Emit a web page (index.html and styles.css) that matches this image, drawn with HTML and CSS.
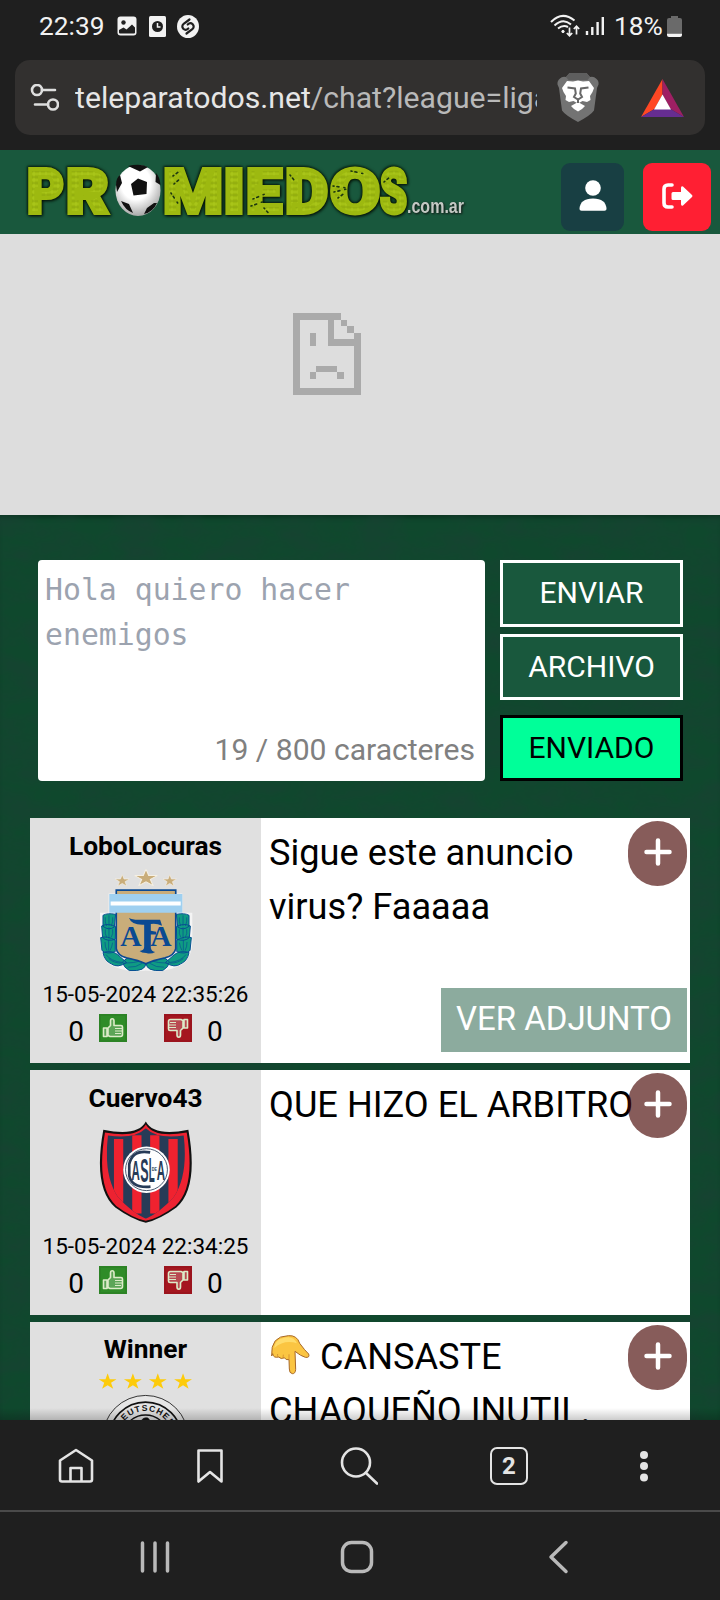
FILE: index.html
```
<!DOCTYPE html>
<html lang="es">
<head>
<meta charset="utf-8">
<title>Promiedos chat</title>
<link rel="stylesheet" href="styles.css">
</head>
<body>
<svg class="defs" width="0" height="0">
  <defs>
    <symbol id="thumb" viewBox="0 0 28 28">
      <rect x="1" y="1" width="26" height="26" fill="none" stroke="#000" stroke-opacity=".06" stroke-width="2"/>
      <path d="M4.500 14h3.500v8.500h-3.500zM9 14l2.500-2.500V7q0-2.200 1.700-2.200Q15 4.800 15 7v4.500h7q1.500 0 1.500 1.500v7.500q0 2-2 2H11L9 21.500z" fill="#fff" fill-opacity=".22" stroke="#dcebc8" stroke-width="1.600" stroke-linejoin="round"/>
      <path d="M16 14.500h7M16 17h7M16 19.500h6" stroke="#dcebc8" stroke-width="1"/>
    </symbol>
    <symbol id="star" viewBox="0 0 20 20" preserveAspectRatio="none">
      <path d="M10 0l2.400 7.500H20l-6.200 4.600 2.400 7.400L10 15l-6.200 4.500 2.400-7.400L0 7.500h7.600z"/>
    </symbol>
    <g id="laurel" fill="#0f9b83" stroke="#084f92" stroke-width="3">
      <path d="M247 318q14-8 38-3l-4 38q-16 12-34-2zM243 350q20-10 42 2l-1 38q-24 8-38-5zM240 385q20-6 44 8v34q-24 10-40-3zM247 430q26-8 44 6l27 24q-28 18-46 4-20-8-25-34zM306 458q20-26 70 2 2 28-50 24-18-10-20-26z"/>
      <path d="M265 318v32M254 324q-2 14 4 26M276 324q2 14-4 26M265 354v34M254 360q-2 14 4 24M276 360q2 14-4 24M264 392v32M253 398q0 16 6 26M276 400q-2 14-8 24M256 436q14 20 50 24M264 448q16 14 40 14M310 462q30 0 56-8M322 474q24 2 44-12" fill="none" stroke-width="2"/>
    </g>
  </defs>
</svg>

<div class="phone">
  <header class="status">
    <div class="status-left">
      <span class="clock">22:39</span>
      <svg class="s-img" width="20" height="20" viewBox="0 0 20 20"><rect x=".5" y=".5" width="19" height="19" rx="3" fill="#f2f2f2"/><circle cx="6.500" cy="6.500" r="2.200" fill="#1f1f1f"/><path d="M2 16.500v-2.500l4.500-2.500 3 2L15 8.500l3 3v5q0 1-1 1H3q-1 0-1-1z" fill="#1f1f1f"/></svg>
      <svg class="s-clock" width="17" height="21" viewBox="0 0 17 21"><rect width="17" height="21" rx="1.500" fill="#f2f2f2"/><circle cx="8.500" cy="10.500" r="5.500" fill="#1f1f1f"/><path d="M8.500 7v4h3" fill="none" stroke="#f2f2f2" stroke-width="1.500"/></svg>
      <svg class="s-shazam" width="22" height="23" viewBox="0 0 22 23"><ellipse cx="11" cy="11.500" rx="11" ry="11.500" fill="#f2f2f2"/><path d="M12.500 4.500L7 8.500q-3 2.500-.7 5.200 2.400 2.300 5-.2M9.500 18.500l5.500-4q3-2.500.7-5.200-2.400-2.300-5 .2" fill="none" stroke="#1f1f1f" stroke-width="2.200" stroke-linecap="round"/></svg>
    </div>
    <div class="status-right">
      <svg width="31" height="24" viewBox="0 0 31 24" fill="none" stroke="#f2f2f2" stroke-width="2"><path d="M1 8Q12-3.500 24.500 6.500M4.500 11.500Q13 3.500 21 10.500M8 14.500Q13 10.500 18 13"/><circle cx="13" cy="17.500" r="1.200" fill="#f2f2f2" stroke-width="1"/><path d="M19.500 13.500v8M16.800 19l2.700 2.700 2.700-2.700M26.500 20.500v-8M23.800 15l2.700-2.700 2.700 2.700" stroke-width="1.700"/></svg>
      <svg class="signal" width="20" height="20" viewBox="0 0 20 20" stroke="#f2f2f2" stroke-width="2.400"><path d="M2 15v4M7.300 11v8M12.600 6v13M17.800 1v18"/></svg>
      <span class="pct">18%</span>
      <svg class="battery" width="15" height="21" viewBox="0 0 15 21"><path d="M4 0h7v2h2q2 0 2 2v13H0V4q0-2 2-2h2z" fill="#6a6a6a"/><path d="M0 17.500h15V19q0 2-2 2H2q-2 0-2-2z" fill="#f4f4f4"/></svg>
    </div>
  </header>

  <div class="address">
    <svg class="tune" width="30" height="28" viewBox="0 0 30 28" fill="none" stroke="#dedede" stroke-width="2.600" stroke-linecap="round"><circle cx="8" cy="6" r="5"/><path d="M13 6h13M6 20.500h13"/><circle cx="24" cy="20.500" r="5"/></svg>
    <div class="url"><span class="host">teleparatodos.net</span>/chat?league=liga</div>
    <svg class="brave" width="42" height="49" viewBox="0 0 42 49"><path d="M12.500 0h17l3.500 4q4-.8 6 1.500 3 2 2.500 6l-1.500 3.500-3 22.500Q34 42 21 49 8 42 5 37.500L2 15 .5 11.500Q0 8 3 5.500 5 3.200 9 4z" fill="#737373"/><path d="M12.500 0h17l3.500 4-2.500 3H11.500L9 4z" fill="#5e5e5e"/><path d="M10 8l6 .5 5-1 5 1L32 8l5 7-1.500 4-2.500 4 .5 4-3.500 2-4.500-1-4.500 2.500-4.500-2.500-4.500 1-3.500-2 .5-4-2.500-4L5 15zM14 33l7-4 7 4-3 3-4 2.500-4-2.500z" fill="#fff"/><path d="M10.500 14.500l7.500 1 .8 5-1.800 3.500 4 2.500 4-2.500-1.800-3.500.8-5 7.500-1M21 26.500V30" fill="none" stroke="#686868" stroke-width="2"/></svg>
    <svg class="bat" width="43" height="38" viewBox="0 0 43 38"><path d="M21.500 0L0 38l13.500-8 8-14.500z" fill="#ff4724"/><path d="M21.500 0L43 38l-13.500-8-8-14.500z" fill="#9e1f63"/><path d="M0 38l13.500-8h16L43 38z" fill="#662d91"/><path d="M21.500 15.500l8.500 15H13z" fill="#fff"/></svg>
  </div>

  <div class="site-head">
    <svg class="logo" width="450" height="60" viewBox="0 0 450 60">
      <defs>
        <radialGradient id="ball" cx=".45" cy=".35" r=".65"><stop offset=".5" stop-color="#fff"/><stop offset="1" stop-color="#a9a9a9"/></radialGradient>
        <pattern id="cloth" width="6" height="6" patternUnits="userSpaceOnUse"><path d="M0 0h6v6H0z" fill="#9db910"/><path d="M0 2h6M2 0v6" stroke="#aeca1c" stroke-width="1"/><path d="M0 5h6" stroke="#86a00c" stroke-width=".8"/></pattern>
      </defs>
      <g class="word" fill="url(#cloth)" stroke="#9db910" stroke-width="4">
        <text x="7" y="53" textLength="37" lengthAdjust="spacingAndGlyphs">P</text>
        <text x="46" y="53" textLength="43" lengthAdjust="spacingAndGlyphs">R</text>
        <text x="143" y="53" textLength="60" lengthAdjust="spacingAndGlyphs">M</text>
        <text x="203" y="53" textLength="22" lengthAdjust="spacingAndGlyphs">I</text>
        <text x="226" y="53" textLength="36" lengthAdjust="spacingAndGlyphs">E</text>
        <text x="265" y="53" textLength="43" lengthAdjust="spacingAndGlyphs">D</text>
        <text x="310" y="53" textLength="50" lengthAdjust="spacingAndGlyphs">O</text>
        <text x="360" y="53" textLength="27" lengthAdjust="spacingAndGlyphs">S</text>
      </g>
      <g stroke="#1c3610" stroke-width="1.600" stroke-linecap="round" stroke-dasharray="1 3 2 5"><path d="M153 16l8-6M154 24l8-7M151 33l8 12M233 39l12-5M231 46l14-5M244 48l7 8M270 15l4 5M313 26l14 2M314 32l13-3M318 38l8-6M331 11l14 3M364 22l6-5"/></g>
      <ellipse cx="118" cy="30.500" rx="22.500" ry="25.500" fill="url(#ball)"/>
      <path d="M111 24l7-5.500 9 3.500-.5 12-13 1.500zM108 6q12-3 20 1l-8 4.500zM96 25q0-7 4-10l2 8-5 9zM136 13q4 4 4.500 12l-5-3zM101 41l8 3 4 9q-8-3-12-12zM134 43l-7 5-3 6q9-2 13-11z" fill="#111"/>
      <text class="domain" x="387" y="53" textLength="57" lengthAdjust="spacingAndGlyphs">.com.ar</text>
    </svg>
    <button class="hbtn user"><svg width="28" height="32" viewBox="0 0 28 32" fill="#fff"><circle cx="14" cy="8" r="7.800"/><path d="M.5 29Q1 18.500 14 18.500T27.500 29q0 1.700-2 1.700H2.500q-2 0-2-1.700z"/></svg></button>
    <button class="hbtn exit"><svg width="32" height="28" viewBox="0 0 32 28"><path d="M11 3H7Q3 3 3 7v14q0 4 4 4h4" fill="none" stroke="#fff" stroke-width="3.600" stroke-linecap="round"/><path d="M12 10h8V6q0-2.500 2-1.500l9 8.500q1 1 0 2l-9 8.500q-2 1-2-1.500v-4h-8q-1.500 0-1.500-1.500v-5q0-1.500 1.500-1.500z" fill="#fff"/></svg></button>
  </div>

  <div class="ad">
    <svg width="68" height="82" viewBox="69 70 204 246" fill="#aaa" shape-rendering="crispEdges"><path d="M69 70h144v20H89v205h163V130h20v185H69zM174 90h18v59h60v19h-78zM213 90h19v19h-19zM232 109h20v20h-20zM120 129h19v39h-19zM139 228h62v19h-62zM120 247h19v20h-19zM201 247h20v20h-20z"/></svg>
  </div>

  <main class="page">
    <svg class="texture" width="720" height="905">
      <filter id="felt" x="0" y="0" width="100%" height="100%" color-interpolation-filters="sRGB"><feTurbulence type="fractalNoise" baseFrequency=".025 .045" numOctaves="4" seed="4"/><feColorMatrix values="0 0 0 0 .1  0 0 0 0 .25  0 0 0 0 .2  1.200 0 0 0 -.35"/></filter>
      <rect width="720" height="905" filter="url(#felt)"/>
    </svg>
    <section class="composer">
      <div class="box">
        <div class="draft">Hola quiero hacer enemigos</div>
        <div class="count">19 / 800 caracteres</div>
      </div>
      <div class="actions">
        <button class="act">ENVIAR</button>
        <button class="act">ARCHIVO</button>
        <button class="act sent">ENVIADO</button>
      </div>
    </section>

    <section class="posts">
      <article class="post">
        <aside class="author">
          <div class="name">LoboLocuras</div>
          <svg class="crest" width="98" height="105" viewBox="229 176 295 315">
            <g fill="#c9ad7a" stroke="#f5f0e4" stroke-width="1"><use href="#star" x="283" y="195" width="44" height="36"/><use href="#star" x="342" y="179" width="69" height="51"/><use href="#star" x="427" y="195" width="42" height="36"/></g>
            <path d="M264 252h222v58h30v80q2 50-28 74-50 30-112 20-62 10-112-20-26-24-26-74v-80h26z" fill="#f4f4f4"/>
            <use href="#laurel"/><use href="#laurel" transform="matrix(-1 0 0 1 753 0)"/>
            <path d="M287 242h179v176q-4 20-32 28-38 8-58 18-20-10-58-18-28-8-31-28z" fill="#c9ad7a" stroke="#0b4a92" stroke-width="5"/>
            <path d="M266 254h220v56H266z" fill="#9fd0f0"/><path d="M270 276h211v12H270z" fill="#fff"/>
            <g class="afa"><text x="299" y="409" font-size="86" textLength="64" lengthAdjust="spacingAndGlyphs">A</text><text x="389" y="409" font-size="86" textLength="64" lengthAdjust="spacingAndGlyphs">A</text></g>
            <path d="M325 325q12 8 38 6h56l6 18q-18-8-34-5v20l16 3v9h-16v40q2 10 13 12-12 8-27 3-14 0-20-6 14-2 14-12v-67q-38 2-46-21z" fill="#0b4a92"/>
          </svg>
          <time>15-05-2024 22:35:26</time>
          <div class="votes"><span>0</span><svg class="up"><use href="#thumb"/></svg><svg class="down"><use href="#thumb"/></svg><span>0</span></div>
        </aside>
        <div class="msg">Sigue este anuncio virus? Faaaaa</div>
        <button class="attach">VER ADJUNTO</button>
        <button class="more"><svg width="28" height="28" viewBox="0 0 28 28"><path d="M14 2.500v23M2.500 14h23" stroke="#fff" stroke-width="4.500" stroke-linecap="round"/></svg></button>
      </article>

      <article class="post">
        <aside class="author">
          <div class="name">Cuervo43</div>
          <svg class="crest" width="98" height="105" viewBox="229 167 295 315">
            <clipPath id="sh"><path d="M262 213q80 12 114-22 34 34 114 22 14 120-30 185-40 45-84 66-44-21-84-66-44-65-30-185z"/></clipPath>
            <path d="M376 171q24 46 128 25 32 175-36 234-50 36-92 46-42-10-92-46-68-59-36-234 104 21 128-25z" fill="#111"/>
            <path d="M376 180q26 42 123 24 28 165-34 221-48 36-89 45-41-9-89-45-62-56-34-221 97 18 123-24z" fill="#ed2231"/>
            <g clip-path="url(#sh)"><path d="M240 180h280v300H240z" fill="#273b57"/><path d="M280 224h28v190h-28zM335 212h28v236h-28zM389 212h28v236h-28zM444 224h28v190h-28z" fill="#f0222f"/></g>
            <circle cx="378" cy="316" r="70" fill="#fff"/><circle cx="378" cy="316" r="63" fill="none" stroke="#273b57" stroke-width="2.500"/>
            <path d="M389 264q-54-10-63 36v34q8 38 64 33" fill="none" stroke="#273b57" stroke-width="8"/>
            <g class="casla"><text x="333" y="346" font-size="84" textLength="25" lengthAdjust="spacingAndGlyphs">A</text><text x="359" y="354" font-size="100" textLength="25" lengthAdjust="spacingAndGlyphs">S</text><text x="385" y="354" font-size="104" textLength="18" lengthAdjust="spacingAndGlyphs">L</text><text x="409" y="346" font-size="84" textLength="25" lengthAdjust="spacingAndGlyphs">A</text><text x="394" y="321" font-size="14" textLength="16" lengthAdjust="spacingAndGlyphs">DE</text></g>
          </svg>
          <time>15-05-2024 22:34:25</time>
          <div class="votes"><span>0</span><svg class="up"><use href="#thumb"/></svg><svg class="down"><use href="#thumb"/></svg><span>0</span></div>
        </aside>
        <div class="msg">QUE HIZO EL ARBITRO</div>
        <button class="more"><svg width="28" height="28" viewBox="0 0 28 28"><path d="M14 2.500v23M2.500 14h23" stroke="#fff" stroke-width="4.500" stroke-linecap="round"/></svg></button>
      </article>

      <article class="post last">
        <aside class="author">
          <div class="name">Winner</div>
          <svg class="crest" width="98" height="105" viewBox="229 184 295 315">
            <g fill="#fdcb0a"><use href="#star" x="234" y="190" width="54" height="48"/><use href="#star" x="310" y="190" width="54" height="48"/><use href="#star" x="385" y="190" width="54" height="48"/><use href="#star" x="461" y="190" width="54" height="48"/></g>
            <circle cx="375" cy="386" r="129" fill="#e6e6e6" stroke="#111" stroke-width="2.500"/>
            <circle cx="375" cy="386" r="109" fill="#e4e4e4" stroke="#111" stroke-width="5"/>
            <circle cx="375" cy="386" r="70" fill="#e0e0e0" stroke="#111" stroke-width="4"/>
            <path id="arc" d="M293 386a82 82 0 0 1 164 0" fill="none"/>
            <text class="dfb"><textPath href="#arc" startOffset="50%">DEUTSCHER</textPath></text>
            <path d="M362 334q6-12 20-9l5 5-7 4q8 8 2 16h-26l4-10q-8 0-8-6zM326 350q12-14 30-14M420 350q-10-12-26-13" fill="#111" stroke="#111" stroke-width="2"/>
          </svg>
        </aside>
        <div class="msg"><svg class="hand" width="42" height="44" viewBox="748 76 126 130" role="img" aria-label="👇"><path d="M756 144Q752 84 806 83q26-2 34 23 16 22 27 32 4 12-10 10-14-4-31-18l2 54q-1 14-10 13t-9-14l-1-28q-10 2-14-6-10 6-17-2-16 4-18-10z" fill="#fbc542" stroke="#a8692a" stroke-width="3"/><path d="M764 120q2-30 42-32 18 0 26 18-38-12-68 14z" fill="#ffdc6b"/><path d="M776 148q-4-5-2-10M793 152q-4-6-2-12M808 155v-16" fill="none" stroke="#d08b2c" stroke-width="2.500"/></svg> CANSASTE CHAQUEÑO INUTIL.</div>
        <button class="more"><svg width="28" height="28" viewBox="0 0 28 28"><path d="M14 2.500v23M2.500 14h23" stroke="#fff" stroke-width="4.500" stroke-linecap="round"/></svg></button>
      </article>
    </section>
  </main>

  <nav class="toolbar">
    <svg width="38" height="38" viewBox="0 0 38 38" fill="none" stroke="#e4e4e4" stroke-width="2.600" stroke-linejoin="round"><path d="M3 13.500L19 3l16 10.500v19q0 2-2 2H5q-2 0-2-2zM13.500 34V21h11v13"/></svg>
    <svg width="38" height="38" viewBox="0 0 38 38" fill="none" stroke="#e4e4e4" stroke-width="2.600" stroke-linejoin="round"><path d="M7.500 3.500h23v31L19 25 7.500 34.500z"/></svg>
    <svg width="38" height="38" viewBox="0 0 38 38" fill="none" stroke="#e4e4e4" stroke-width="2.600" stroke-linecap="round"><circle cx="16" cy="15.500" r="14"/><path d="M26 26l11 10.500"/></svg>
    <span class="tabs">2</span>
    <svg width="38" height="38" viewBox="0 0 38 38" fill="#e4e4e4"><circle cx="19" cy="8" r="4"/><circle cx="19" cy="19" r="4"/><circle cx="19" cy="30.500" r="4"/></svg>
  </nav>
  <nav class="system">
    <svg width="34" height="34" viewBox="0 0 34 34" stroke="#b9b9b9" stroke-width="3.500" stroke-linecap="round"><path d="M4.500 3v28M17 3v28M29.500 3v28"/></svg>
    <svg width="34" height="34" viewBox="0 0 34 34" fill="none" stroke="#b9b9b9" stroke-width="3.500"><rect x="2.500" y="2.500" width="29" height="29" rx="9"/></svg>
    <svg width="34" height="34" viewBox="0 0 34 34" fill="none" stroke="#b9b9b9" stroke-width="3.500" stroke-linecap="round" stroke-linejoin="round"><path d="M24 2.500L9 17l15 14.500"/></svg>
  </nav>
</div>
</body>
</html>
```
FILE: styles.css
```
* { box-sizing: border-box; }
body { margin: 0; background: #1f1f1f; font-family: Roboto, "Liberation Sans", sans-serif; }
button { font-family: inherit; border: 0; padding: 0; margin: 0; }
svg { display: block; flex: none; }
.defs { position: absolute; }
.phone { width: 720px; height: 1600px; display: flex; flex-direction: column; overflow: hidden; }

.status { height: 60px; padding: 0 38px 0 39px; display: flex; justify-content: space-between; align-items: flex-start; color: #f2f2f2; font-size: 26.300px; line-height: 52px; flex: none; }
.status-left, .status-right { display: flex; align-items: center; height: 52px; }
.clock { width: 78px; }
.s-clock { margin-left: 12px; }
.s-shazam { margin-left: 11px; }
.signal { margin-left: 4px; }
.pct { margin-left: 9px; width: 49px; }
.battery { margin-left: 4px; }

.address { flex: none; height: 75px; margin: 0 15px; padding: 0 21px 0 14px; border-radius: 15px; background: #32302f; display: flex; align-items: center; }
.url { margin-left: 16px; width: 462px; overflow: hidden; white-space: nowrap; font-size: 30.200px; line-height: 44px; padding-top: 1px; color: #b9b9b9; }
.host { color: #e6e6e6; }
.brave { margin-left: 20px; }
.bat { margin-left: 42px; }

.site-head { flex: none; height: 84px; margin-top: 15px; background: #19583d; padding: 0 9px 0 20px; display: flex; align-items: flex-start; }
.logo { margin-top: 10px; overflow: visible; }
.word { font: 900 62px Roboto, sans-serif; stroke-linejoin: miter; filter: drop-shadow(1px 1px 1.5px #041006) drop-shadow(-1px -1px 1px #082010); }
.domain { font: 700 21px "Liberation Sans", sans-serif; fill: #c4c9c4; filter: drop-shadow(1px 1px 1px #111); }
.hbtn { height: 68px; margin-top: 13px; border-radius: 9px; display: flex; align-items: center; justify-content: center; }
.user { margin-left: 91px; width: 63px; background: #183f43; padding-bottom: 3px; }
.exit { margin-left: 19px; width: 68px; background: #ff1f33; padding-bottom: 3px; }

.ad { flex: none; height: 281px; background: #ddd; padding: 79px 0 0 293px; }

.page { position: relative; flex: none; height: 905px; overflow: hidden; background: #0f482d; box-shadow: inset 0 5px 5px -3px rgba(0,20,10,.5); padding: 45px 30px 0; }
.page::after { content: ""; position: absolute; left: 0; right: 0; bottom: 0; height: 12px; background: linear-gradient(transparent, rgba(0,0,0,.2)); }
.texture { position: absolute; left: 0; top: 0; }
.composer { position: relative; display: flex; gap: 15px; padding: 0 7px 0 8px; height: 221px; }
.box { width: 447px; height: 221px; border-radius: 4px; background: #fff; padding: 7px 10px 9px 7px; display: flex; flex-direction: column; justify-content: space-between; }
.draft { font: 29.800px/45px "DejaVu Sans Mono", monospace; color: #9ca3af; }
.count { text-align: right; font-size: 30.100px; line-height: 45px; color: #808080; white-space: nowrap; }
.actions { width: 183px; display: flex; flex-direction: column; }
.act { height: 66px; border: 3px solid #fff; background: #19583d; color: #fff; font-size: 30px; margin-bottom: 7px; padding-bottom: 2px; }
.act:first-child { height: 67px; }
.act.sent { border-color: #000; background: #00ff99; color: #000; margin: 8px 0 0; }

.posts { position: relative; margin-top: 37px; display: flex; flex-direction: column; gap: 7px; }
.post { position: relative; height: 245px; background: #fff; display: flex; }
.author { width: 231px; background: #e0e0e0; display: flex; flex-direction: column; align-items: center; color: #000; }
.name { font-size: 26.300px; font-weight: 700; line-height: 40px; margin-top: 8px; height: 42px; }
.last .name { margin-top: 7px; }
time { font-size: 22.500px; line-height: 34px; margin-top: 4px; }
.votes { display: flex; align-items: center; height: 32px; margin-top: 1px; font-size: 28px; }
.votes svg { width: 28px; height: 28px; }
.votes span { line-height: 32px; padding-top: 7px; }
.up { margin: 0 37px 0 15px; background: #2f8c28; }
.down { margin-right: 15px; background: #a5161f; transform: rotate(180deg); }
.afa { font-family: "Liberation Serif", serif; font-weight: 700; fill: #0b4a92; }
.casla { font-family: "Liberation Sans", sans-serif; font-weight: 700; fill: #273b57; }
.dfb { font: 700 26px "Liberation Sans", sans-serif; letter-spacing: 3px; text-anchor: middle; fill: #111; }
.msg { flex: 1; padding: 8px 40px 0 8px; font-size: 36.200px; line-height: 54px; color: #000; }
.hand { display: inline-block; vertical-align: -8px; }
.attach { position: absolute; right: 3px; bottom: 11px; width: 246px; height: 64px; background: #8cab9e; color: #fff; font-size: 33px; padding-bottom: 3px; }
.more { position: absolute; right: 3px; top: 3px; width: 59px; height: 65px; border-radius: 30px; background: rgba(70,4,2,.65); display: flex; justify-content: center; align-items: center; padding-bottom: 4px; }

.toolbar { flex: none; height: 92px; padding-top: 1px; border-bottom: 2px solid #4a4a4a; background: #1f1f1f; display: grid; grid-template-columns: 151px 117px 182px 118px 152px; align-items: center; justify-items: center; }
.tabs { width: 38px; height: 38px; border: 2.600px solid #e4e4e4; border-radius: 7px; color: #e4e4e4; font-size: 24px; font-weight: 700; line-height: 34px; text-align: center; }
.system { flex: none; height: 88px; padding-top: 1px; display: grid; grid-template-columns: 310px 93px 312px; align-items: center; justify-items: center; background: #1f1f1f; }
```
